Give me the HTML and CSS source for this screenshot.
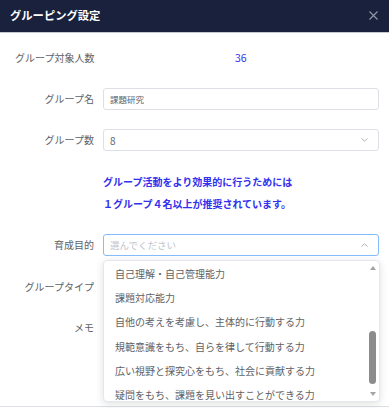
FILE: index.html
```html
<!DOCTYPE html>
<html lang="ja">
<head>
<meta charset="utf-8">
<link rel="stylesheet" href="styles.css">
</head>
<body>
<div class="dialog">
  <div class="header">
    <span class="title">グルーピング設定</span>
    <svg class="close" width="9" height="9" viewBox="0 0 9 9"><path d="M0.5 0.5L8.5 8.5M8.5 0.5L0.5 8.5" stroke="#8e94a4" stroke-width="1.2" fill="none"/></svg>
  </div>
  <div class="body">
    <div class="info-row">
      <span class="info-label">グループ対象人数</span>
      <span class="info-value">36</span>
    </div>
    <div class="row">
      <div class="label">グループ名</div>
      <div class="field">
        <div class="input"><span class="input-text">課題研究</span></div>
      </div>
    </div>
    <div class="row">
      <div class="label">グループ数</div>
      <div class="field">
        <div class="input select"><span class="value">8</span>
          <svg class="chev" width="7" height="4" viewBox="0 0 7 4"><path d="M0.5 0.5L3.5 3.2L6.5 0.5" stroke="#a4a8b0" stroke-width="0.9" fill="none"/></svg>
        </div>
      </div>
    </div>
    <div class="row">
      <div class="label"></div>
      <div class="notice">
        <div>グループ活動をより効果的に行うためには</div>
        <div>１グループ４名以上が推奨されています。</div>
      </div>
    </div>
    <div class="row">
      <div class="label">育成目的</div>
      <div class="field">
        <div class="input select focused"><span class="placeholder">選んでください</span>
          <svg class="chev" width="7" height="4" viewBox="0 0 7 4"><path d="M0.5 3.5L3.5 0.8L6.5 3.5" stroke="#a4a8b0" stroke-width="0.9" fill="none"/></svg>
        </div>
        <div class="dropdown">
          <ul class="options">
            <li>自己理解・自己管理能力</li>
            <li>課題対応能力</li>
            <li>自他の考えを考慮し、主体的に行動する力</li>
            <li>規範意識をもち、自らを律して行動する力</li>
            <li>広い視野と探究心をもち、社会に貢献する力</li>
            <li>疑問をもち、課題を見い出すことができる力</li>
          </ul>
          <div class="scrollbar">
            <div class="sb-btn"><span class="tri-up"></span></div>
            <div class="sb-track"><div class="sb-thumb"></div></div>
            <div class="sb-btn"><span class="tri-down"></span></div>
          </div>
        </div>
      </div>
    </div>
    <div class="row">
      <div class="label">グループタイプ</div>
      <div class="field"></div>
    </div>
    <div class="row">
      <div class="label">メモ</div>
      <div class="field"></div>
    </div>
  </div>
  <div class="footer-line"></div>
</div>
</body>
</html>
```
FILE: styles.css
```css
* { box-sizing: border-box; }
html, body { margin: 0; padding: 0; background: #fff; }
body {
  width: 389px;
  height: 408px;
  overflow: hidden;
  font-family: "Noto Sans CJK JP", "Noto Sans", sans-serif;
  color: #606266;
}
.dialog { width: 389px; height: 408px; display: flex; flex-direction: column; }
.header {
  height: 33px;
  flex: none;
  background: #19213d;
  border-bottom: 1px solid #c5c9d2;
  display: flex;
  align-items: center;
  justify-content: space-between;
  padding: 0 11px 1px 10px;
}
.title { color: #fff; font-size: 11.3px; font-weight: 700; line-height: 1; }
.close { display: block; }
.body {
  flex: 1;
  padding: 13px 10px 0 0;
  display: flex;
  flex-direction: column;
  gap: 19.5px;
}
.info-row {
  height: 22px;
  display: flex;
  align-items: center;
  padding-left: 15px;
  font-size: 10px;
}
.info-label { width: 220px; color: #606266; }
.info-value { color: #3434ee; font-size: 10.5px; }
.row { display: flex; align-items: flex-start; }
.label {
  width: 94px;
  flex: none;
  height: 22px;
  line-height: 22px;
  text-align: right;
  font-size: 10px;
  color: #606266;
  white-space: nowrap;
}
.field { position: relative; margin-left: 9px; flex: 1; height: 22px; }
.input {
  height: 22px;
  border: 1px solid #dcdfe6;
  border-radius: 3px;
  display: flex;
  align-items: center;
  padding: 0 10px 0 6px;
}
.input-text { font-size: 8.5px; color: #606266; }
.select { justify-content: space-between; }
.value { font-size: 10px; color: #606266; }
.placeholder { font-size: 9.5px; color: #c0c4cc; }
.focused { border-color: #85bdfa; }
.chev { display: block; }
.notice {
  margin-left: 9px;
  color: #3030ee;
  font-weight: 700;
  font-size: 10px;
  line-height: 22px;
}
.dropdown {
  position: absolute;
  top: 26px;
  left: 0;
  width: 277px;
  height: 142px;
  background: #fff;
  border: 1px solid #e4e7ed;
  border-radius: 4px;
  box-shadow: 0 2px 8px rgba(0,0,0,0.12);
  display: flex;
  overflow: hidden;
  z-index: 5;
}
.options {
  list-style: none;
  margin: 0;
  padding: 0.5px 0 0 11px;
  flex: 1;
  overflow: hidden;
}
.options li {
  height: 24.4px;
  line-height: 24.4px;
  font-size: 10px;
  color: #606266;
  white-space: nowrap;
}
.scrollbar {
  width: 11px;
  margin-right: 1px;
  display: flex;
  flex-direction: column;
}
.sb-btn { height: 14px; display: flex; align-items: center; justify-content: center; flex: none; }
.tri-up {
  width: 0; height: 0;
  border-left: 3.5px solid transparent;
  border-right: 3.5px solid transparent;
  border-bottom: 4px solid #a3a3a3;
}
.tri-down {
  width: 0; height: 0;
  border-left: 3.5px solid transparent;
  border-right: 3.5px solid transparent;
  border-top: 4px solid #a3a3a3;
}
.sb-track { flex: 1; padding-top: 56px; display: flex; justify-content: center; }
.sb-thumb { width: 7px; height: 53px; background: #8c8c8c; border-radius: 3.5px; }
.footer-line { height: 1px; background: #dcdfe6; flex: none; margin-bottom: 1px; }
```
